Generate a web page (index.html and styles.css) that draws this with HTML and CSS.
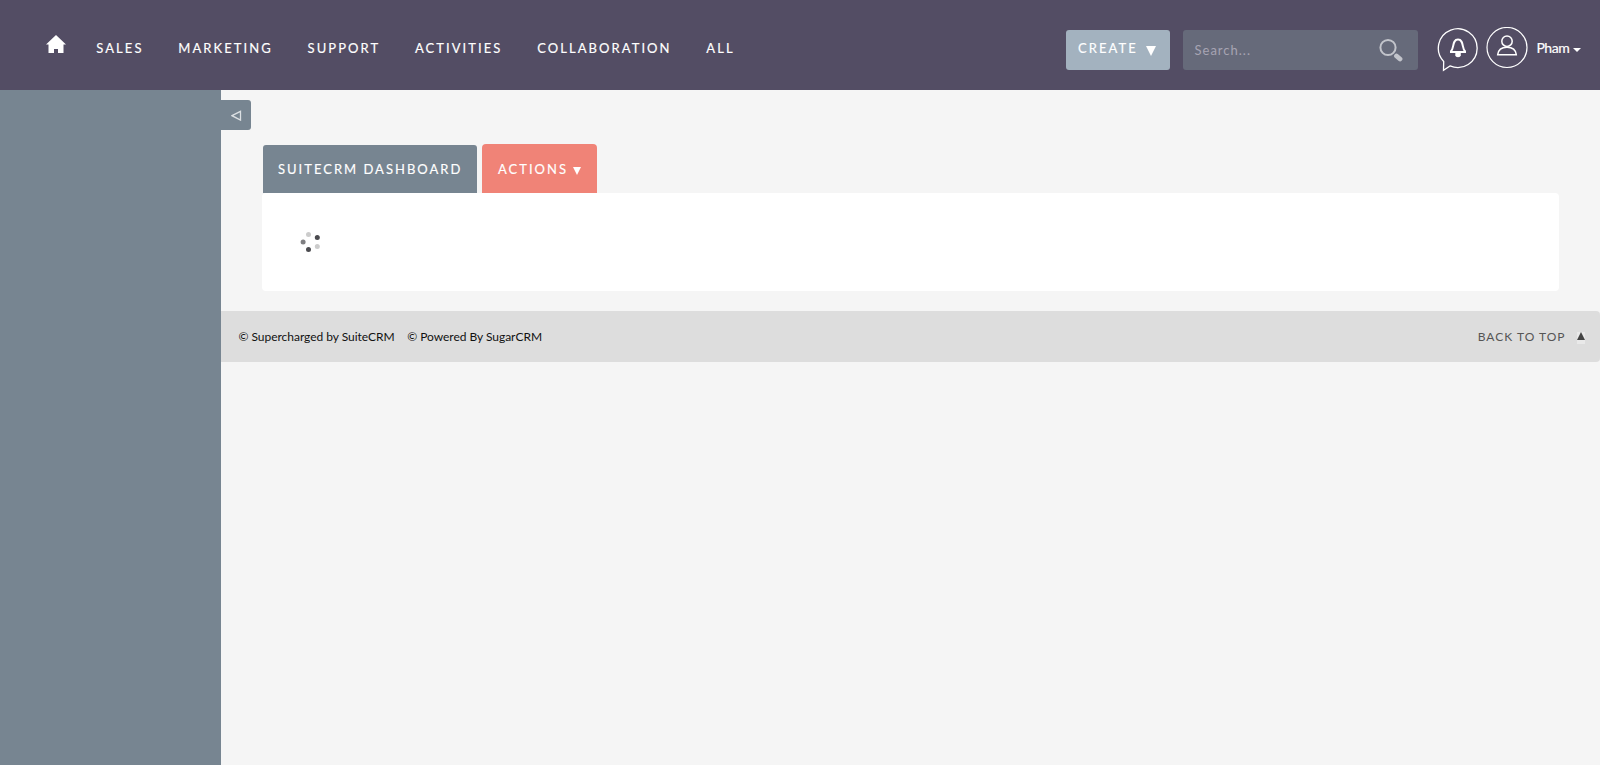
FILE: index.html
```html
<!DOCTYPE html>
<html lang="en">
<head>
<meta charset="utf-8">
<title>SuiteCRM</title>
<link rel="stylesheet" href="styles.css">
</head>
<body>
<header class="topbar">
  <a class="home"><svg width="20" height="18" viewBox="0 0 20 18"><path fill="#fff" d="M10 0 20 9.500H17.500V18H12V14H8V18H2.500V9.500H0Z"/></svg></a>
  <nav class="menu">
    <a>Sales</a><a>Marketing</a><a>Support</a><a>Activities</a><a>Collaboration</a><a>All</a>
  </nav>
  <div class="tools">
    <button class="create"><span>Create</span><svg width="10" height="10" viewBox="0 0 10 10"><path fill="#fff" d="M0 0H10L5 10Z"/></svg></button>
    <div class="search"><span>Search...</span>
      <svg width="24" height="24" viewBox="0 0 24 24" fill="none" stroke="#c2c4cb"><circle cx="9" cy="9.500" r="7.600" stroke-width="2"/><path d="M17.500 18 21 21" stroke-width="4.800" stroke-linecap="round"/></svg>
    </div>
    <svg class="bell" width="42" height="46" viewBox="0 0 42 46" fill="none" stroke="#fff"><path stroke-width="1.300" d="M6.700 34.500A19.400 19.400 0 1 1 13 38.900L6.500 43.200Z"/><path stroke-width="2" d="M14 25V24.200C17.300 21.500 15 12.600 21 12.600S24.700 21.500 28 24.200V25Z"/><path fill="#fff" stroke="none" d="M18.300 25.500H23.800V28.500Q23.500 30.300 21 30.300T18.300 28.500Z"/></svg>
    <svg class="user" width="42" height="42" viewBox="0 0 42 42" fill="none" stroke="#fff"><circle cx="21" cy="20.500" r="20" stroke-width="1.200"/><g stroke-width="1.500"><circle cx="21" cy="14.200" r="5.200"/><path d="M11.700 27.700C12.200 23 15.500 20.200 21 20.200S29.800 23 30.300 27.700Z"/></g></svg>
    <span class="name">Pham</span><i class="caret"></i>
  </div>
</header>
<div class="body">
  <aside class="sidebar"></aside>
  <main class="content">
    <button class="toggle"><svg width="11" height="11" viewBox="0 0 11 11"><path fill="none" stroke="#dce0e3" stroke-width="1.300" d="M1 5.700 9.500 1.300V10.100Z"/></svg></button>
    <div class="dashboard">
      <div class="tabs">
        <a class="tab">SuiteCRM Dashboard</a>
        <a class="tab actions">Actions<svg width="8" height="8" viewBox="0 0 8 8"><path fill="#fff" d="M0 0H8L4 8Z"/></svg></a>
      </div>
      <section class="panel">
        <svg width="20" height="22" viewBox="0 0 20 22"><circle cx="8.500" cy="3.500" r="2.500" fill="#ccc"/><circle cx="17.300" cy="6.400" r="2.500" fill="#4b4b4f"/><circle cx="17.300" cy="15.500" r="2.500" fill="#ccc"/><circle cx="8.500" cy="18.400" r="2.500" fill="#4b4b4f"/><circle cx="3.100" cy="11" r="2.500" fill="#7f7f82"/></svg>
      </section>
    </div>
    <footer class="footer">
      <span class="credit">© Supercharged by SuiteCRM</span><span class="credit">© Powered By SugarCRM</span>
      <a class="totop">Back to top</a><i class="up"><svg width="8" height="8" viewBox="0 0 8 8"><path fill="#444" d="M4 0 8 8H0Z"/></svg></i>
    </footer>
  </main>
</div>
</body>
</html>
```
FILE: styles.css
```css
* { box-sizing: border-box; }
body { margin: 0; height: 765px; display: flex; flex-direction: column; overflow: hidden; background: #f5f5f5; font-family: Lato, sans-serif; font-size: 13px; color: #fff; }
svg { display: block; flex: none; }
button { border: 0; padding: 0; font: inherit; color: inherit; }
.topbar { height: 90px; flex: none; display: flex; align-items: flex-start; background: #534d64; }
.home { margin: 35px 0 0 46px; }
.menu { display: flex; gap: 34.8px; margin: 38px 0 0 30.3px; line-height: 20px; letter-spacing: 2.060px; text-transform: uppercase; }
.menu, .create, .tab { -webkit-text-stroke: 0.150px #fff; }
.tools { display: flex; margin-left: auto; }
.create { width: 104px; height: 40px; margin-top: 30px; padding: 8px 14px 0 12.500px; display: flex; align-items: flex-start; justify-content: space-between; background: #a3b2bf; border-radius: 3px; line-height: 20px; letter-spacing: 2.060px; text-transform: uppercase; }
.create svg { margin-top: 8px; }
.search { width: 235px; height: 40px; margin: 30px 0 0 13px; padding: 0 15px 0 12px; display: flex; align-items: center; justify-content: space-between; background: #666a7a; border-radius: 3px; color: #a6a4b3; letter-spacing: 1px; }
.bell { margin: 27px 0 0 19px; }
.user { margin: 27px 0 0 7px; }
.name { width: 36.500px; margin: 38px 0 0 9px; font-size: 14px; line-height: 20px; letter-spacing: -0.500px; -webkit-text-stroke: 0.200px #fff; }
.caret { margin: 48px 19px 0 0; border: 4px solid transparent; border-top-color: #fff; border-bottom: 0; align-self: flex-start; }
.body { flex: 1; display: flex; }
.sidebar { width: 221px; flex: none; background: #778591; }
.content { flex: 1; }
.toggle { display: flex; width: 30px; height: 30px; margin-top: 10px; padding: 10px 0 0 10px; background: #778591; border-radius: 0 3px 3px 0; }
.dashboard { margin: 14px 41px 20px; }
.tabs { display: flex; align-items: flex-end; gap: 5px; padding-left: 1px; }
.tab { width: 214px; height: 48px; padding-left: 15px; display: flex; align-items: center; background: #778591; border-radius: 3px 3px 0 0; letter-spacing: 2px; text-transform: uppercase; white-space: nowrap; }
.actions { width: 115px; height: 49px; padding-left: 16px; background: #f08377; border-radius: 4px 4px 0 0; }
.actions svg { margin: 4px 0 0 5px; }
.panel { height: 98px; padding: 38px; background: #fff; border-radius: 4px; }
.footer { height: 51px; display: flex; align-items: center; gap: 12.500px; padding: 0 15px 0 17.500px; background: #ddd; border-radius: 0 4px 4px 0; font-size: 12px; color: #111; }
.credit { letter-spacing: -0.030px; }
.totop { margin-left: auto; margin-right: -1px; color: #555; letter-spacing: 1px; text-transform: uppercase; }
.up { width: 8px; height: 12px; margin-top: 2px; background: #e9e9e9; }
```
